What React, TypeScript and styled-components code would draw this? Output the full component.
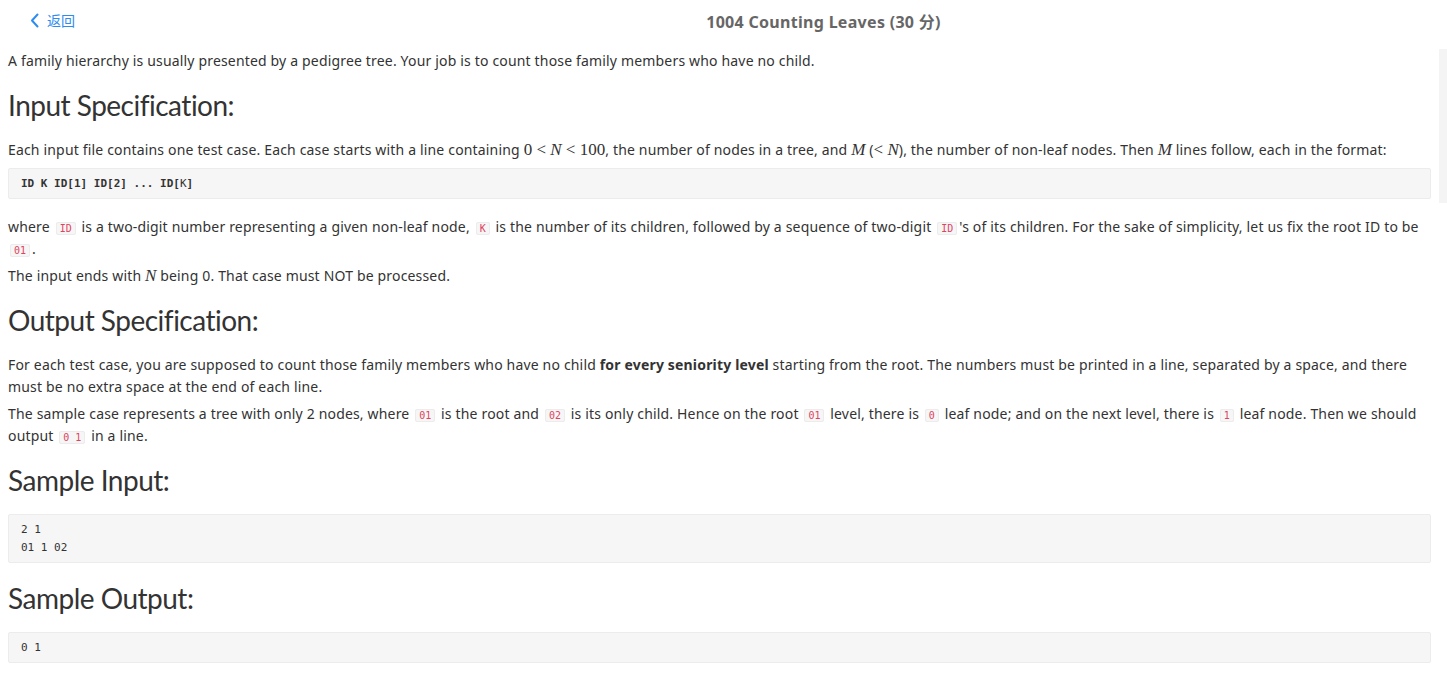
import React from "react";
import styled, { createGlobalStyle } from "styled-components";

const Global = createGlobalStyle`
  html, body { margin: 0; padding: 0; background: #fff; }
  body {
    font-family: "Noto Sans", "Open Sans", "Noto Sans CJK SC", sans-serif;
    color: #333;
    font-size: 14px;
  }
`;

const Page = styled.div`
  position: relative;
  width: 1447px;
  min-height: 676px;
`;

const Header = styled.header`
  display: flex;
  align-items: center;
  height: 42px;
`;

const BackArea = styled.div`
  width: 200px;
  padding-left: 30px;
  box-sizing: border-box;
`;

const BackLink = styled.a`
  display: inline-flex;
  align-items: center;
  gap: 8px;
  color: #2d8cf0;
  font-size: 14px;
  font-family: "Noto Sans CJK SC", sans-serif;
  text-decoration: none;
  cursor: pointer;
`;

const Title = styled.h1`
  flex: 1;
  margin: 0;
  text-align: center;
  font-size: 16px;
  font-weight: 700;
  letter-spacing: 0.3px;
  color: #666;
  font-family: "Noto Sans", "Noto Sans CJK SC", sans-serif;
`;

const Content = styled.main`
  padding: 0 16px 8px 8px;
  overflow: hidden;
`;

const P = styled.p`
  margin: 8px 0 5px;
  line-height: 22px;
  letter-spacing: 0.17px;
  & + & { margin-top: 5px; }
`;

const Heading = styled.h3`
  margin: 18px 0 18px;
  font-family: "Lato", "Noto Sans", sans-serif;
  font-size: 28px;
  font-weight: 400;
  line-height: 31px;
  letter-spacing: -0.5px;
  color: #333;
  pre + & { margin-top: 20px; }
`;

const Pre = styled.pre`
  margin: 7px 0 17px;
  padding: 5.5px 12px;
  background: #f6f6f6;
  border: 1px solid #ececec;
  border-radius: 2px;
  font-family: "DejaVu Sans Mono", monospace;
  font-size: 11px;
  line-height: 18px;
  color: #333;
  white-space: pre;
`;

const Strong = styled.span<{ $light?: boolean }>`
  font-weight: ${(p) => (p.$light ? 400 : 700)};
`;

const Code = styled.code`
  font-family: "DejaVu Sans Mono", monospace;
  font-size: 10px;
  line-height: 1;
  letter-spacing: 0;
  color: #e0435d;
  background: #f6f6f6;
  border: 1px solid #ececec;
  border-radius: 2px;
  padding: 0 3px;
  margin: 0 2px;
`;

const Math = styled.span`
  font-family: "Liberation Serif", "DejaVu Serif", serif;
  font-size: 17px;
  line-height: 1;
  letter-spacing: 0;
`;

const Var = styled.i`
  font-style: italic;
`;

const Bold = styled.b`
  font-weight: 700;
`;

const ScrollTrack = styled.div`
  position: absolute;
  right: 0;
  top: 49px;
  width: 8px;
  height: 154px;
  background: #f4f4f4;
`;

const Chevron = () => (
  <svg width="9" height="15" viewBox="0 0 9 15" fill="none">
    <path d="M7.5 1.5 L2 7.5 L7.5 13.5" stroke="#2d8cf0" strokeWidth="2" strokeLinecap="round" strokeLinejoin="round" />
  </svg>
);

export default function App() {
  return (
    <Page>
      <Global />
      <Header>
        <BackArea>
          <BackLink>
            <Chevron />
            返回
          </BackLink>
        </BackArea>
        <Title>1004 Counting Leaves (30 分)</Title>
      </Header>
      <Content>
        <P>A family hierarchy is usually presented by a pedigree tree. Your job is to count those family members who have no child.</P>
        <Heading>Input Specification:</Heading>
        <P>
          Each input file contains one test case. Each case starts with a line containing{" "}
          <Math>0 &lt; <Var>N</Var> &lt; 100</Math>, the number of nodes in a tree, and <Math><Var>M</Var></Math> (
          <Math>&lt; <Var>N</Var></Math>), the number of non-leaf nodes. Then <Math><Var>M</Var></Math> lines follow, each in the format:
        </P>
        <Pre>
          <Strong>ID K ID[1] ID[2] ... ID[</Strong>
          <Strong $light>K</Strong>
          <Strong>]</Strong>
        </Pre>
        <P>
          where <Code>ID</Code> is a two-digit number representing a given non-leaf node, <Code>K</Code> is the number of its children, followed by a sequence of two-digit <Code>ID</Code>'s of its children. For the sake of simplicity, let us fix the root ID to be <Code>01</Code>.
        </P>
        <P>
          The input ends with <Math><Var>N</Var></Math> being 0. That case must NOT be processed.
        </P>
        <Heading>Output Specification:</Heading>
        <P>
          For each test case, you are supposed to count those family members who have no child <Bold>for every seniority level</Bold> starting from the root. The numbers must be printed in a line, separated by a space, and there must be no extra space at the end of each line.
        </P>
        <P>
          The sample case represents a tree with only 2 nodes, where <Code>01</Code> is the root and <Code>02</Code> is its only child. Hence on the root <Code>01</Code> level, there is <Code>0</Code> leaf node; and on the next level, there is <Code>1</Code> leaf node. Then we should output <Code>0 1</Code> in a line.
        </P>
        <Heading>Sample Input:</Heading>
        <Pre>{"2 1\n01 1 02"}</Pre>
        <Heading>Sample Output:</Heading>
        <Pre>0 1</Pre>
      </Content>
      <ScrollTrack />
    </Page>
  );
}
